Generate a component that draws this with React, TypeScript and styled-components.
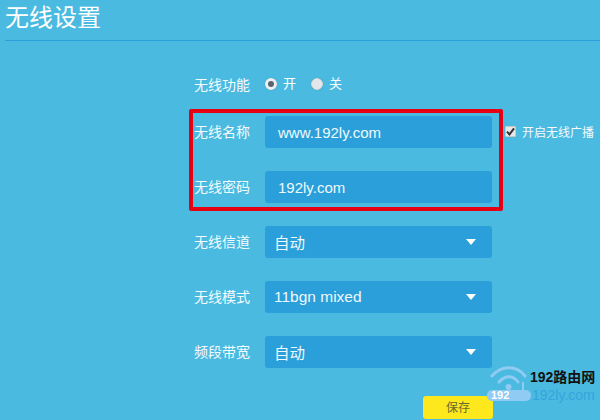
import React from "react";
import styled, { createGlobalStyle } from "styled-components";

const GlobalStyle = createGlobalStyle`
  html, body {
    margin: 0;
    padding: 0;
    overflow: hidden;
    background: #4abae0;
  }
`;

interface Field {
  label: string;
  value: string;
  isSelect?: boolean;
}

const nameFields: Field[] = [
  { label: "无线名称", value: "www.192ly.com" },
  { label: "无线密码", value: "192ly.com" },
];

const selectFields: Field[] = [
  { label: "无线信道", value: "自动", isSelect: true },
  { label: "无线模式", value: "11bgn mixed", isSelect: true },
  { label: "频段带宽", value: "自动", isSelect: true },
];

function FieldRow({ field, children }: { field: Field; children?: React.ReactNode }) {
  return (
    <UIRow>
      <UILabel>{field.label}</UILabel>
      <UIInput $isSelect={field.isSelect}>
        <span>{field.value}</span>
        {field.isSelect && <UIArrow />}
      </UIInput>
      {children}
    </UIRow>
  );
}

export default function App() {
  return (
    <UIPage>
      <GlobalStyle />
      <UITitle>无线设置</UITitle>

      <UIForm>
        <UISwitchRow>
          <UILabel>无线功能</UILabel>
          <UIRadios>
            <UIRadio $checked />
            <UIRadioText>开</UIRadioText>
            <UIRadio />
            <UIRadioText>关</UIRadioText>
          </UIRadios>
        </UISwitchRow>

        <FieldRow field={nameFields[0]}>
          <UIBroadcast>
            <UICheckbox>
              <svg width="9" height="9" viewBox="0 0 9 9">
                <path d="M1 4.6 L3.5 7.4 L8 1.4" fill="none" stroke="#333" strokeWidth="2" />
              </svg>
            </UICheckbox>
            开启无线广播
          </UIBroadcast>
        </FieldRow>
        <FieldRow field={nameFields[1]} />
        {selectFields.map((field) => (
          <FieldRow key={field.label} field={field} />
        ))}

        <UIActions>
          <UISave>保存</UISave>
        </UIActions>
      </UIForm>

      <UIHighlight />

      <UIWatermark>
        <svg width="46" height="44" viewBox="0 0 46 44">
          <g fill="none" stroke="#8fcbf2" strokeWidth="3" strokeLinecap="round">
            <path d="M3 14 C12 3 28 3 36 14" />
            <path d="M10 20 C16 13 24 13 29 20" />
          </g>
          <circle cx="19.5" cy="25" r="3" fill="#8fcbf2" />
          <path d="M34 20 L34 32" stroke="#8fcbf2" strokeWidth="2" />
        </svg>
        <UIWatermarkPill>
          <b>192</b>
        </UIWatermarkPill>
        <UIWatermarkBrand>192路由网</UIWatermarkBrand>
        <UIWatermarkUrl>192ly.com</UIWatermarkUrl>
      </UIWatermark>
    </UIPage>
  );
}

const UIPage = styled.div`
  position: relative;
  width: 600px;
  height: 420px;
  overflow: hidden;
  background: #4abae0;
  color: #fff;
  font-family: "Liberation Sans", "Noto Sans CJK SC", sans-serif;
`;

const UITitle = styled.div`
  margin-left: 5px;
  height: 40px;
  border-bottom: 1px solid #2b9fd9;
  font-size: 24px;
  line-height: 35px;
`;

const UIForm = styled.div`
  display: flex;
  flex-direction: column;
  padding: 28px 0 0 194px;
`;

const UIRow = styled.div`
  display: flex;
  align-items: center;
  height: 32px;
  margin-bottom: 23px;
`;

const UISwitchRow = styled(UIRow)`
  height: 32px;
  margin-bottom: 15px;
`;

const UILabel = styled.div`
  width: 71px;
  font-size: 14px;
  line-height: 16px;
  color: #f4fbfe;
`;

const UIRadios = styled.div`
  display: flex;
  align-items: center;
  margin-top: -2px;
`;

const UIRadio = styled.span<{ $checked?: boolean }>`
  box-sizing: border-box;
  width: 12px;
  height: 12px;
  border-radius: 50%;
  background: ${(p) => (p.$checked ? "#5c6470" : "#e4e7ea")};
  border: ${(p) => (p.$checked ? "3px solid #eef0f2" : "1px solid #d6dadd")};
  box-shadow: 0 0 1px rgba(60, 80, 100, 0.5);
`;

const UIRadioText = styled.span`
  margin: 0 15px 0 6px;
  font-size: 13px;
  line-height: 14px;
`;

const UIInput = styled.div<{ $isSelect?: boolean }>`
  position: relative;
  box-sizing: border-box;
  display: flex;
  align-items: center;
  width: 227px;
  height: 32px;
  padding-left: ${(p) => (p.$isSelect ? "9px" : "13px")};
  border-radius: 3px;
  background: #2b9fd9;
  font-size: ${(p) => (p.$isSelect ? "15.5px" : "15px")};
  color: #eef9fd;
`;

const UIArrow = styled.span`
  position: absolute;
  right: 16px;
  top: 13px;
  width: 0;
  height: 0;
  border-left: 5px solid transparent;
  border-right: 5px solid transparent;
  border-top: 6px solid #fff;
`;

const UIBroadcast = styled.div`
  display: flex;
  align-items: center;
  margin: -2px 0 0 13px;
  font-size: 12px;
  white-space: nowrap;
  color: #f4fbfe;
`;

const UICheckbox = styled.span`
  box-sizing: border-box;
  display: flex;
  align-items: center;
  justify-content: center;
  width: 11px;
  height: 11px;
  margin-right: 6px;
  background: #e8e8e8;
  border: 1px solid #c8c8c8;
  border-radius: 1px;
`;

const UIActions = styled.div`
  display: flex;
  margin: 5px 0 0 229px;
`;

const UISave = styled.div`
  display: flex;
  align-items: center;
  justify-content: center;
  width: 70px;
  height: 23px;
  padding-bottom: 2px;
  box-sizing: border-box;
  border-radius: 3px;
  background: #fde71d;
  color: #6a6a30;
  font-size: 12px;
`;

const UIHighlight = styled.div`
  position: absolute;
  left: 189px;
  top: 109px;
  box-sizing: border-box;
  width: 314px;
  height: 102px;
  border: 4px solid #e60012;
  border-radius: 2px;
`;

const UIWatermark = styled.div`
  position: absolute;
  left: 486px;
  top: 362px;
  width: 114px;
  height: 58px;
  svg {
    position: absolute;
    left: 3px;
    top: 0;
  }
`;

const UIWatermarkPill = styled.div`
  position: absolute;
  left: 1px;
  top: 28px;
  width: 44px;
  height: 11px;
  border-radius: 5px;
  background: #8fcbf2;
  font-size: 11px;
  line-height: 11px;
  padding-left: 4px;
  box-sizing: border-box;
  font-family: "Liberation Sans", sans-serif;
`;

const UIWatermarkBrand = styled.div`
  position: absolute;
  left: 44px;
  top: 7px;
  font-size: 14px;
  line-height: 16px;
  font-weight: 700;
  color: #111;
  white-space: nowrap;
`;

const UIWatermarkUrl = styled.div`
  position: absolute;
  left: 46px;
  top: 25px;
  font-size: 14px;
  line-height: 16px;
  color: #35a4de;
  white-space: nowrap;
`;
